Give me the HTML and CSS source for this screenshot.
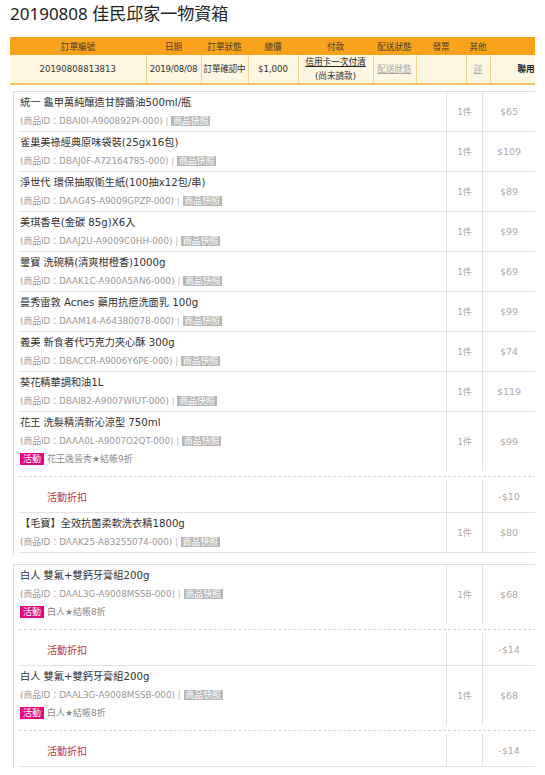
FILE: index.html
```html
<!DOCTYPE html>
<html lang="zh-Hant">
<head>
  <meta charset="UTF-8">
  <meta name="viewport" content="width=device-width, initial-scale=1.0">
  <title>20190808 佳民邱家一物資箱</title>
  <link rel="stylesheet" href="styles.css">
</head>
<body>
  <h1 class="page-title">20190808 佳民邱家一物資箱</h1>

  <!-- Order summary -->
  <div class="order-wrap">
    <table class="order-table">
      <colgroup>
        <col class="c-no"><col class="c-date"><col class="c-status"><col class="c-total"><col class="c-pay">
        <col class="c-ship"><col class="c-inv"><col class="c-other"><col class="c-action">
      </colgroup>
      <thead>
        <tr>
          <th>訂單編號</th>
          <th>日期</th>
          <th>訂單狀態</th>
          <th>總價</th>
          <th>付款</th>
          <th>配送狀態</th>
          <th>發票</th>
          <th>其他</th>
          <th></th>
        </tr>
      </thead>
      <tbody>
        <tr>
          <td>20190808813813</td>
          <td class="tight">2019/08/08</td>
          <td class="tight">訂單確認中</td>
          <td>$1,000</td>
          <td><a href="#" class="pay-link">信用卡一次付清</a><br>(尚未請款)</td>
          <td><a href="#" class="muted-link">配送狀態</a></td>
          <td></td>
          <td><a href="#" class="muted-link">詳</a></td>
          <td class="action">聯用</td>
        </tr>
      </tbody>
    </table>
  </div>

  <!-- Items, first package -->
  <div class="item-box">
    <table class="items">
      <colgroup><col><col class="c-qty"><col class="c-price"></colgroup>
      <tr>
        <td class="desc"><div class="name">統一 龜甲萬純釀造甘醇醬油500ml/瓶</div><div class="meta">(商品ID：DBAI0I-A900892PI-000) <span class="bar">|</span> <span class="snap">商品快照</span></div></td>
        <td class="qty">1件</td><td class="price">$65</td>
      </tr>
      <tr>
        <td class="desc"><div class="name">雀巢美祿經典原味袋裝(25gx16包)</div><div class="meta">(商品ID：DBAJ0F-A72164785-000) <span class="bar">|</span> <span class="snap">商品快照</span></div></td>
        <td class="qty">1件</td><td class="price">$109</td>
      </tr>
      <tr>
        <td class="desc"><div class="name">淨世代 環保抽取衛生紙(100抽x12包/串)</div><div class="meta">(商品ID：DAAG4S-A9009GPZP-000) <span class="bar">|</span> <span class="snap">商品快照</span></div></td>
        <td class="qty">1件</td><td class="price">$89</td>
      </tr>
      <tr>
        <td class="desc"><div class="name">美琪香皂(金碳 85g)X6入</div><div class="meta">(商品ID：DAAJ2U-A9009C0HH-000) <span class="bar">|</span> <span class="snap">商品快照</span></div></td>
        <td class="qty">1件</td><td class="price">$99</td>
      </tr>
      <tr>
        <td class="desc"><div class="name">璽寶 洗碗精(清爽柑橙香)1000g</div><div class="meta">(商品ID：DAAK1C-A900A5AN6-000) <span class="bar">|</span> <span class="snap">商品快照</span></div></td>
        <td class="qty">1件</td><td class="price">$69</td>
      </tr>
      <tr>
        <td class="desc"><div class="name">曼秀雷敦 Acnes 藥用抗痘洗面乳 100g</div><div class="meta">(商品ID：DAAM14-A64380078-000) <span class="bar">|</span> <span class="snap">商品快照</span></div></td>
        <td class="qty">1件</td><td class="price">$99</td>
      </tr>
      <tr>
        <td class="desc"><div class="name">義美 新食者代巧克力夾心酥 300g</div><div class="meta">(商品ID：DBACCR-A9006Y6PE-000) <span class="bar">|</span> <span class="snap">商品快照</span></div></td>
        <td class="qty">1件</td><td class="price">$74</td>
      </tr>
      <tr>
        <td class="desc"><div class="name">葵花精華調和油1L</div><div class="meta">(商品ID：DBAI82-A9007WIUT-000) <span class="bar">|</span> <span class="snap">商品快照</span></div></td>
        <td class="qty">1件</td><td class="price">$119</td>
      </tr>
      <tr class="promo">
        <td class="desc"><div class="name">花王 洗髮精清新沁涼型 750ml</div><div class="meta">(商品ID：DAAA0L-A9007O2QT-000) <span class="bar">|</span> <span class="snap">商品快照</span></div><div class="deal"><span class="tag">活動</span> 花王逸晉秀★結帳9折</div></td>
        <td class="qty">1件</td><td class="price">$99</td>
      </tr>
      <tr class="dash-row"><td colspan="3"><div class="dash"></div></td></tr>
      <tr class="discount">
        <td class="desc">活動折扣</td>
        <td class="qty"></td><td class="price">-$10</td>
      </tr>
      <tr>
        <td class="desc"><div class="name">【毛寶】全效抗菌柔軟洗衣精1800g</div><div class="meta">(商品ID：DAAK25-A83255074-000) <span class="bar">|</span> <span class="snap">商品快照</span></div></td>
        <td class="qty">1件</td><td class="price">$80</td>
      </tr>
    </table>
  </div>

  <!-- Items, second package -->
  <div class="item-box">
    <table class="items">
      <colgroup><col><col class="c-qty"><col class="c-price"></colgroup>
      <tr class="promo">
        <td class="desc"><div class="name">白人 雙氟+雙鈣牙膏組200g</div><div class="meta">(商品ID：DAAL3G-A9008MSSB-000) <span class="bar">|</span> <span class="snap">商品快照</span></div><div class="deal"><span class="tag">活動</span> 白人★結帳8折</div></td>
        <td class="qty">1件</td><td class="price">$68</td>
      </tr>
      <tr class="dash-row"><td colspan="3"><div class="dash"></div></td></tr>
      <tr class="discount">
        <td class="desc">活動折扣</td>
        <td class="qty"></td><td class="price">-$14</td>
      </tr>
      <tr class="promo">
        <td class="desc"><div class="name">白人 雙氟+雙鈣牙膏組200g</div><div class="meta">(商品ID：DAAL3G-A9008MSSB-000) <span class="bar">|</span> <span class="snap">商品快照</span></div><div class="deal"><span class="tag">活動</span> 白人★結帳8折</div></td>
        <td class="qty">1件</td><td class="price">$68</td>
      </tr>
      <tr class="dash-row"><td colspan="3"><div class="dash"></div></td></tr>
      <tr class="discount">
        <td class="desc">活動折扣</td>
        <td class="qty"></td><td class="price">-$14</td>
      </tr>
    </table>
  </div>
</body>
</html>
```

FILE: styles.css
```css
body {
  margin: 2px 10px;
  background: #fff;
  color: #333;
  font-family: "DejaVu Sans", "Noto Sans CJK TC", sans-serif;
}

.page-title {
  margin: 0 0 11px;
  font-family: "Noto Sans", "Noto Sans CJK TC", sans-serif;
  font-size: 17px;
  font-weight: normal;
  line-height: 24px;
  color: #222;
}

/* order summary table */
.order-wrap {
  width: 526px;
  overflow: hidden;
}

.order-table {
  width: 560px;
  table-layout: fixed;
  border-collapse: collapse;
  font-size: 8.6px;
}

.c-no { width: 136px; }
.c-date { width: 55px; }
.c-status { width: 47px; }
.c-total { width: 50px; }
.c-pay { width: 75px; }
.c-ship { width: 43px; }
.c-inv { width: 50px; }
.c-other { width: 24px; }
.c-action { width: 80px; }

.order-table th {
  height: 18px;
  padding: 0;
  background: #f9a31c;
  color: #4a3a22;
  font-weight: normal;
  text-align: center;
}

.order-table td {
  height: 27px;
  padding: 0;
  background: #fdf6e1;
  border-left: 1px solid #f6d18f;
  border-bottom: 2px solid #f9c26a;
  text-align: center;
  line-height: 14px;
  white-space: nowrap;
  color: #333;
}

.order-table td:first-child {
  border-left: none;
}

.order-table td.tight {
  letter-spacing: -0.2px;
}

.order-table td.action {
  text-align: left;
  padding-left: 27px;
  font-weight: bold;
  color: #222;
}

.pay-link {
  color: #222;
}

.muted-link {
  color: #aaa;
}

/* item lists */
.item-box {
  width: 523px;
  box-sizing: border-box;
  margin: 6px 0 0 3px;
  padding: 0 0 2px 5px;
  border-left: 1px solid #ddd;
  border-top: 1px solid #ddd;
}

.item-box + .item-box {
  margin-top: 9px;
}

.items {
  width: 100%;
  table-layout: fixed;
  border-collapse: collapse;
}

.c-qty { width: 36px; }
.c-price { width: 53px; }

.items td {
  padding: 0;
  vertical-align: middle;
}

.items .desc {
  padding: 1px 0 1px 1px;
  border-bottom: 1px solid #e2e2e2;
}

.items .qty,
.items .price {
  border-left: 1px solid #e2e2e2;
  border-bottom: 1px solid #e2e2e2;
  text-align: center;
  font-size: 9px;
  color: #aaa;
}

.items .price {
  border-right: 1px solid #e2e2e2;
  font-size: 9.5px;
}

.name,
.meta,
.deal {
  overflow: hidden;
  white-space: nowrap;
}

.name {
  height: 19px;
  font-size: 10.2px;
  line-height: 19px;
  color: #333;
}

.meta {
  height: 18px;
  font-size: 8.8px;
  line-height: 18px;
  color: #999;
}

.bar {
  color: #bbb;
}

.snap {
  background: #b8b8b8;
  color: #fff;
  padding: 0 2px;
}

.deal {
  height: 19px;
  font-size: 9px;
  line-height: 19px;
  color: #888;
}

.tag {
  background: #e4097f;
  color: #fff;
  padding: 1px 3px;
}

.promo .desc,
.promo .qty,
.promo .price {
  border-bottom: none;
}

.promo .desc {
  padding-bottom: 2px;
}

.dash-row td {
  padding: 5px 0 3px;
}

.dash {
  border-top: 1px dashed #d6d6d6;
}

.discount td {
  height: 30px;
}

.discount .desc {
  padding-left: 28px;
  font-size: 10px;
  color: #c4343c;
}
```
